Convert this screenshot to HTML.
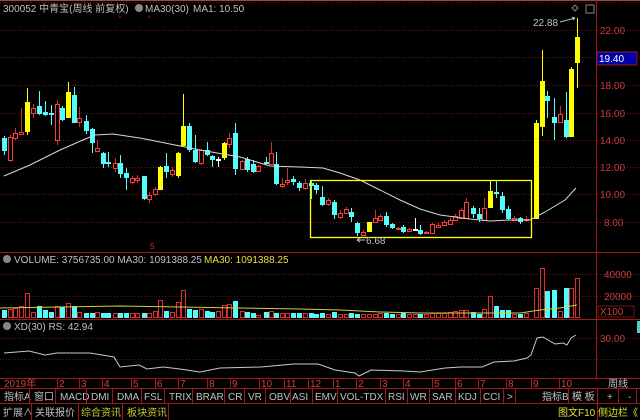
<!DOCTYPE html>
<html><head><meta charset="utf-8"><style>
body{margin:0;background:#000;width:640px;height:420px;overflow:hidden;font-family:"Liberation Sans","Noto Sans CJK SC",sans-serif}
svg{display:block}
text{font-family:"Liberation Sans","Noto Sans CJK SC",sans-serif}
</style></head><body>
<svg id="s" width="640" height="420" viewBox="0 0 640 420" xmlns="http://www.w3.org/2000/svg">
<rect width="640" height="420" fill="#000"/>
<line x1="0" y1="0.5" x2="640" y2="0.5" stroke="#a04848"/>
<g id="grid" stroke="#7a1010" stroke-dasharray="1,2"></g>
<line x1="596.5" y1="0" x2="596.5" y2="378" stroke="#a01818"/>
<line x1="0" y1="252.5" x2="640" y2="252.5" stroke="#a01818"/>
<line x1="0" y1="319.5" x2="640" y2="319.5" stroke="#a01818"/>
<line x1="0" y1="378.5" x2="640" y2="378.5" stroke="#a01818"/>
<line x1="0" y1="388.5" x2="640" y2="388.5" stroke="#a01818"/>
<line x1="0" y1="403.5" x2="640" y2="403.5" stroke="#a01818"/>
<g font-size="10" fill="#c0c0c0">
<text x="3" y="12">300052 中青宝(周线 前复权)</text>
<circle cx="139" cy="8" r="4" fill="#888"/>
<text x="145" y="12">MA30(30)</text><text x="193" y="12">MA1: 10.50</text>
</g>
<g font-size="10" fill="#c83c3c">
<text x="600" y="34">22.00</text><text x="600" y="89">18.00</text><text x="600" y="117">16.00</text>
<text x="600" y="144">14.00</text><text x="600" y="171">12.00</text><text x="600" y="198">10.00</text><text x="604" y="226">8.00</text>
<text x="604" y="278">40000</text><text x="604" y="300">20000</text>
<text x="600" y="342">30.00</text>
</g>
<rect x="597" y="52" width="40" height="13" fill="#0000a8" stroke="#a01818"/>
<text x="599" y="62" font-size="10" fill="#fff">19.40</text>
<rect x="598" y="306" width="36" height="11" fill="none" stroke="#7a1010"/>
<text x="600" y="315" font-size="10" fill="#c83c3c">X100</text>
<rect x="637" y="321" width="3" height="12" fill="#5cc"/>
<polygon points="575,5 578,8 575,11 572,8" fill="none" stroke="#888"/>
<rect x="586" y="5" width="8" height="8" fill="none" stroke="#888"/>
<g id="ch"></g>
<rect x="310.5" y="180.5" width="221" height="57" fill="none" stroke="#ffff00" stroke-width="1.3"/>
<text x="366" y="244" font-size="10" fill="#c0c0c0">6.68</text>
<path d="M357 240 h8 M357 240 l3 -2 M357 240 l3 2" stroke="#c0c0c0" fill="none"/>
<text x="533" y="26" font-size="10" fill="#c0c0c0">22.88</text>
<path d="M560 22 L575 18 M575 18 l-3 -1 M575 18 l-2 2" stroke="#c0c0c0" fill="none"/>
<text x="150" y="249" font-size="8" fill="#e03030">5</text>
<circle cx="120" cy="17" r="0.8" fill="#c0c"/><circle cx="149" cy="17" r="0.8" fill="#c0c"/>
<g font-size="10" fill="#c0c0c0">
<circle cx="7" cy="259" r="4" fill="#888"/>
<text x="14" y="263">VOLUME: 3756735.00  MA30: 1091388.25</text>
<text x="204" y="263" fill="#e0e040">MA30: 1091388.25</text>
<circle cx="7" cy="326" r="4" fill="#888"/>
<text x="14" y="330">XD(30)  RS: 42.94</text>
</g>
<g font-size="10" fill="#d04040">
<text x="4" y="387">2019年</text><text x="59" y="387">2</text><text x="81" y="387">3</text><text x="104" y="387">4</text><text x="133" y="387">5</text><text x="157" y="387">6</text><text x="180" y="387">7</text><text x="209" y="387">8</text><text x="232" y="387">9</text><text x="261" y="387">10</text><text x="286" y="387">11</text><text x="310" y="387">12</text><text x="335" y="387">1</text><text x="358" y="387">2</text><text x="382" y="387">3</text><text x="405" y="387">4</text><text x="434" y="387">5</text><text x="457" y="387">6</text><text x="480" y="387">7</text><text x="508" y="387">8</text><text x="533" y="387">9</text><text x="561" y="387">10</text>
</g>
<g id="ax" stroke="#a01818"></g>
<text x="608" y="387" font-size="10" fill="#c0c0c0">周线</text>
<g id="bt" font-size="10" fill="#c0c0c0"></g>
</svg>
<script>
var NS="http://www.w3.org/2000/svg";
function el(p,t,a,tx){var e=document.createElementNS(NS,t);for(var k in a)e.setAttribute(k,a[k]);if(tx!=null)e.textContent=tx;document.getElementById(p).appendChild(e);return e;}
[2,30,57,85,113,140,167,194,222].forEach(function(y){el("grid","line",{x1:0,y1:y+.5,x2:640,y2:y+.5});});
[274,296].forEach(function(y){el("grid","line",{x1:0,y1:y+.5,x2:640,y2:y+.5});});
[338,359].forEach(function(y){el("grid","line",{x1:0,y1:y+.5,x2:640,y2:y+.5});});
var C=[[4,138,151,136,155,'c',8],[10,137,160,135,162,'r',9],[15,133,138,128,140,'r',10],[21,132,134,108,135,'r',12],[27,102,132,88,135,'y',25],[33,108,113,104,118,'r',6],[39,106,114,91,115,'c',12],[45,112,115,101,116,'c',8],[51,113,115,105,125,'c',6],[57,104,140,100,145,'r',12],[62,108,120,106,121,'c',11],[68,92,118,82,118,'y',15],[74,95,123,87,123,'c',12],[79,118,122,107,127,'r',6],[86,121,131,115,134,'c',5],[92,129,143,128,153,'c',5],[97,148,151,140,152,'r',6],[103,153,164,152,168,'c',5],[108,162,164,152,167,'c',5],[115,163,168,158,172,'r',5],[120,163,174,155,178,'c',5],[126,173,178,168,190,'c',5],[132,178,182,176,184,'r',5],[137,178,180,175,183,'r',5],[144,176,199,176,200,'c',5],[149,195,199,192,203,'r',5],[155,189,194,187,196,'r',7],[160,167,190,166,190,'y',18],[166,166,172,153,178,'c',7],[172,170,174,167,177,'r',6],[178,153,176,152,178,'y',16],[183,126,146,94,146,'y',28],[189,126,150,123,152,'c',9],[195,150,162,135,163,'c',8],[201,150,163,149,165,'r',9],[207,150,155,142,156,'c',7],[212,156,160,155,167,'c',6],[218,159,161,157,167,'w',7],[224,143,158,142,160,'y',13],[229,138,144,133,148,'r',14],[235,133,169,123,175,'c',17],[242,161,169,160,170,'r',7],[247,159,170,157,172,'c',6],[253,164,172,160,173,'c',5],[258,166,171,165,172,'r',3],[266,162,164,157,165,'c',6],[271,153,164,142,165,'r',7],[276,164,184,152,185,'c',5],[282,184,186,178,188,'r',5],[287,180,182,168,185,'r',5],[293,179,182,176,185,'c',5],[299,183,188,181,191,'c',5],[305,183,188,179,190,'r',5],[311,183,186,181,199,'c',5],[316,185,190,183,194,'c',4],[322,197,205,186,206,'c',5],[328,200,204,198,206,'r',4],[334,202,215,200,219,'c',6],[340,213,217,210,219,'r',4],[346,209,213,207,214,'r',4],[351,212,217,208,222,'c',5],[357,223,233,222,236,'c',4],[363,232,235,230,236,'r',4],[369,222,232,222,232,'y',4],[375,218,222,210,223,'r',4],[380,216,220,214,221,'r',5],[386,216,225,212,227,'c',5],[392,224,228,223,229,'c',4],[398,228,229,227,230,'r',4],[403,227,232,225,233,'c',5],[409,229,231,228,232,'r',4],[415,229,231,218,231,'w',4],[420,230,234,225,235,'c',4],[426,232,233,231,234,'r',4],[432,224,233,223,234,'r',5],[438,225,227,223,228,'r',5],[444,222,225,220,226,'r',5],[450,220,224,218,225,'r',6],[455,216,220,214,221,'r',7],[461,210,218,208,219,'r',8],[466,202,218,198,219,'r',8],[473,208,214,206,218,'c',6],[479,214,219,208,222,'c',4],[484,208,220,198,221,'r',9],[490,191,208,180,208,'y',22],[496,192,194,180,198,'c',12],[502,196,210,192,213,'c',8],[508,209,219,206,220,'c',8],[514,218,220,216,221,'r',4],[520,218,222,217,224,'c',4],[526,219,220,216,222,'r',5],[536,123,219,120,219,'y',30],[542,81,127,50,136,'y',50],[547,96,101,91,118,'c',27],[554,117,123,98,140,'c',28],[560,114,122,106,123,'r',7],[566,120,137,92,138,'c',30],[571,69,137,67,137,'y',30],[577,37,63,18,88,'y',40]];
var col={c:'#54fcfc',r:'#ff3c3c',y:'#ffff00',w:'#ffffff'};
C.forEach(function(d){var x=d[0],c=col[d[5]];
 var wc=d[5]=='r'?'#c83232':c;
 el("ch","line",{x1:x+.5,y1:d[3],x2:x+.5,y2:d[4],stroke:wc});
 var h=Math.max(1,d[2]-d[1]);
 if(d[5]=='r')el("ch","rect",{x:x-1.5,y:d[1]+.5,width:4,height:h,fill:"#000",stroke:c});
 else el("ch","rect",{x:x-2,y:d[1],width:5,height:h,fill:c});
 var vh=d[6];
 if(d[5]=='c')el("ch","rect",{x:x-2,y:318-vh,width:5,height:vh,fill:'#54fcfc'});
 else el("ch","rect",{x:x-1.5,y:318-vh+.5,width:4,height:vh-1,fill:"none",stroke:'#d83030'});
});
function pl(pts,c){el("ch","polyline",{points:pts,fill:"none",stroke:c,"stroke-width":1});}
pl("4,176 30,165 60,150 83,140 95,135 113,134 140,138 160,142 180,146 200,150 240,157 270,166 300,167 323,168 340,173 360,180 380,190 400,200 420,209 440,215 470,219 490,221 510,220 530,220 545,212 565,200 576,188","#d8d8d8");
pl("0,308 60,307 120,306 180,307 240,308 300,309 340,310 380,312 420,313 470,313 520,313 540,310 560,308 577,305","#d0d040");
pl("4,353 29,351 45,355 57,353 90,353 114,357 120,367 139,365 147,369 163,367 180,369 200,372 220,368 261,367 294,364 318,364 335,370 355,373 359,376 371,370 404,371 420,372 445,368 461,367 482,367 494,362 514,361 527,358 531,355 537,338 543,337 555,344 563,343 567,345 571,338 576,335","#c8c8c8");
[57,79,102,131,155,178,207,230,259,284,308,333,356,380,403,432,455,478,506,531,559].forEach(function(x){el("ax","line",{x1:x+.5,y1:379,x2:x+.5,y2:388});});
var B=[["指标A",2,29],["窗口",32,55],["MACD",58,86],["DMI",89,112],["DMA",115,141],["FSL",142,164],["TRIX",167,192],["BRAR",194,224],["CR",226,244],["VR",246,265],["OBV",267,290],["ASI",290,312],["EMV",313,337],["VOL-TDX",338,385],["RSI",386,407],["WR",408,429],["SAR",430,455],["KDJ",456,480],["CCI",481,503],[">",505,515],["指标B",540,568],["模 板",570,597],["+",605,618],["-",626,636]];
B.forEach(function(b){el("bt","text",{x:b[1]+2,y:400},b[0]);el("bt","line",{x1:b[2]+.5,y1:389,x2:b[2]+.5,y2:403,stroke:"#a01818"});});
var D=[["扩展∧",3,31,"#c0c0c0"],["关联报价",35,78,"#c0c0c0"],["综合资讯",81,122,"#c8c830"],["板块资讯",127,168,"#c8c830"],["图文F10",558,597,"#e0e030"],["侧边栏《",598,640,"#e0e030"]];
D.forEach(function(b){el("bt","text",{x:b[1],y:416,fill:b[3]},b[0]);el("bt","line",{x1:b[2]+.5,y1:404,x2:b[2]+.5,y2:420,stroke:"#a01818"});});
</script>
</body></html>
